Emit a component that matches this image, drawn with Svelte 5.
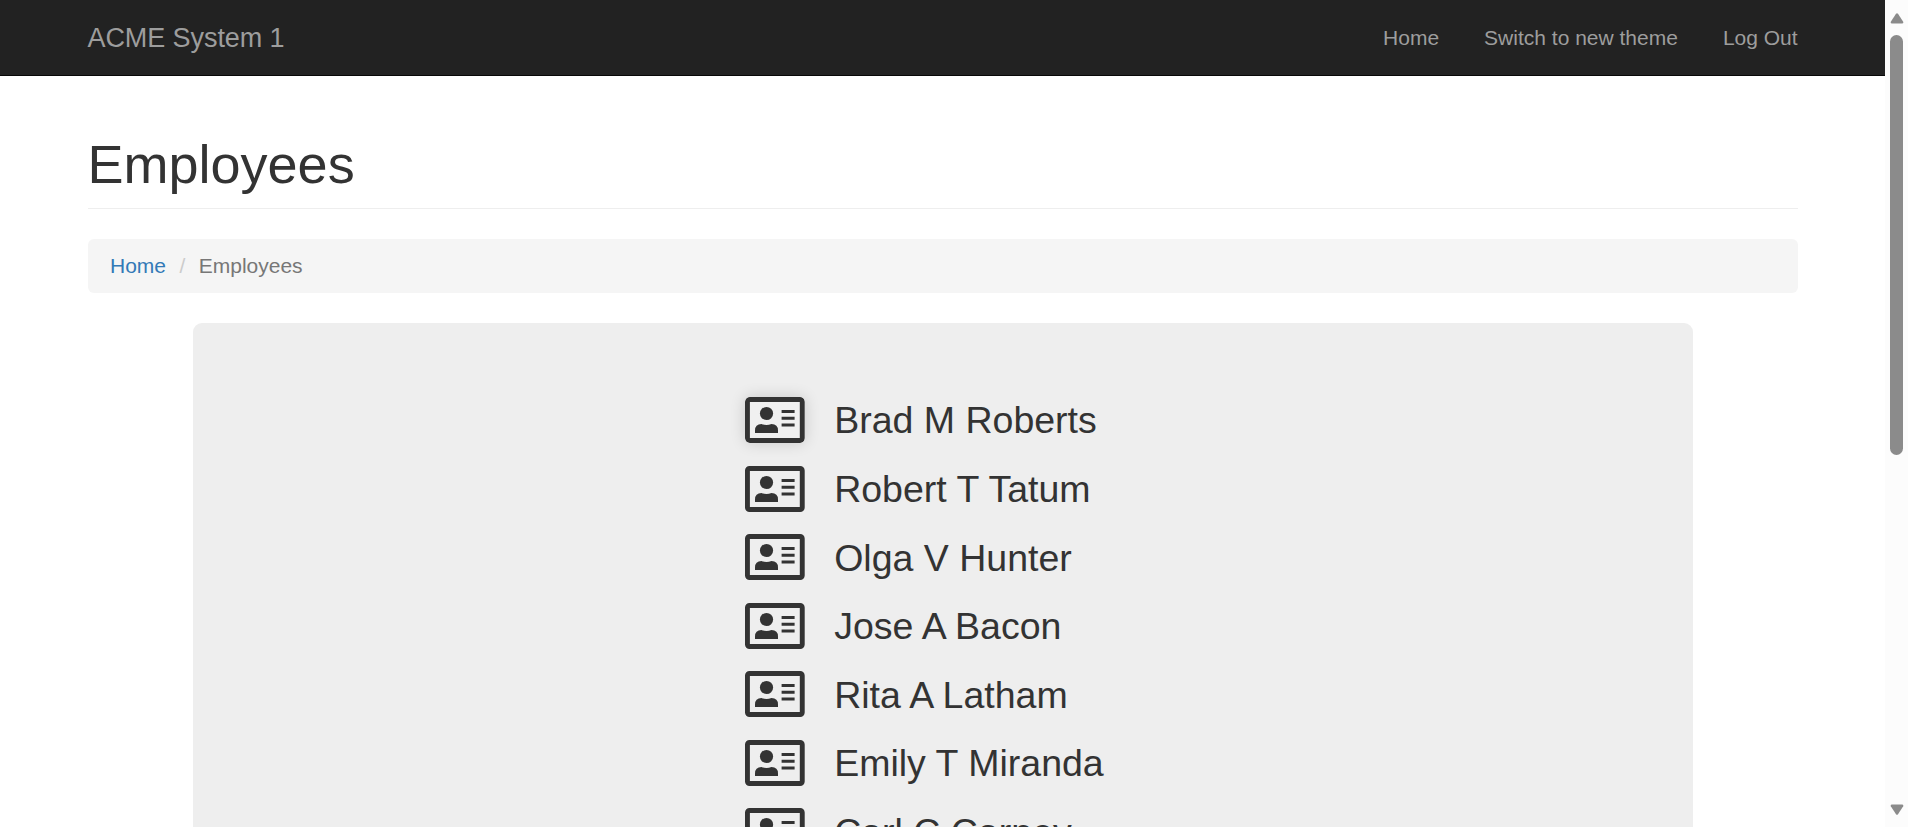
<script>
  const links = ['Home', 'Switch to new theme', 'Log Out'];
  const employees = [
    'Brad M Roberts',
    'Robert T Tatum',
    'Olga V Hunter',
    'Jose A Bacon',
    'Rita A Latham',
    'Emily T Miranda',
    'Carl C Carney'
  ];
</script>

<div class="window">
  <div class="page">
    <header class="navbar">
      <span class="brand">ACME System 1</span>
      <nav>
        {#each links as link}<span>{link}</span>{/each}
      </nav>
    </header>
    <main>
      <h1>Employees</h1>
      <div class="breadcrumb">
        <span class="home">Home</span><span class="slash">/</span><span>Employees</span>
      </div>
      <section class="panel">
        <div class="list">
          {#each employees as name, i}
            <div class="row">
              <svg class:active={i === 0} viewBox="0 0 60 46" width="60" height="46">
                <path fill-rule="evenodd" d="M4.5 0H55.2A4.5 4.5 0 0 1 59.7 4.5V41.5A4.5 4.5 0 0 1 55.2 46H4.5A4.5 4.5 0 0 1 0 41.5V4.5A4.5 4.5 0 0 1 4.5 0ZM4.9 5V41H54.8V5Z" />
                <circle cx="21.5" cy="16.5" r="6.6" />
                <path d="M10 36V33.5Q10 27 16.5 27Q21.5 29 26.5 27Q33 27 33 33.5V36Z" />
                <path d="M36.6 13H49.6V16H36.6ZM36.6 19.8H49.6V22.8H36.6ZM36.6 26.6H49.6V29.6H36.6Z" />
              </svg>
              <span>{name}</span>
            </div>
          {/each}
        </div>
      </section>
    </main>
  </div>
  <div class="scrollbar">
    <svg viewBox="0 0 14 11" width="14" height="11"><path d="M6 .8Q7 -.3 8 .8L13.2 8.8Q13.7 10.5 12 10.5H2Q.3 10.5 .8 8.8Z" /></svg>
    <div class="thumb"></div>
    <svg class="down" viewBox="0 0 14 11" width="14" height="11"><path d="M6 10.2Q7 11.3 8 10.2L13.2 2.2Q13.7 .5 12 .5H2Q.3 .5 .8 2.2Z" /></svg>
  </div>
</div>

<style>
  :global(body) {
    overflow: hidden;
    background: #fff;
  }
  .window {
    display: flex;
    height: 827px;
    overflow: hidden;
    font: 21px/30px "Liberation Sans", Arial, sans-serif;
    color: #333;
  }
  .page {
    width: 1885px;
    height: 827px;
    overflow: hidden;
  }
  .navbar {
    box-sizing: border-box;
    height: 76px;
    padding: 0 87.4px 0 87.5px;
    display: flex;
    justify-content: space-between;
    align-items: center;
    background: #222;
    border-bottom: 1px solid #080808;
    color: #9d9d9d;
  }
  .brand {
    font-size: 27px;
    letter-spacing: -0.08px;
  }
  nav {
    display: flex;
    gap: 45px;
  }
  main {
    padding: 0 87.5px;
  }
  h1 {
    box-sizing: border-box;
    margin: 0 0 30px;
    height: 133px;
    padding-top: 58px;
    border-bottom: 1px solid #eee;
    font-size: 54px;
    line-height: 60px;
    font-weight: normal;
  }
  .breadcrumb {
    display: flex;
    align-items: center;
    box-sizing: border-box;
    height: 54px;
    padding: 0 22.5px;
    border-radius: 6px;
    background: #f5f5f5;
    color: #777;
  }
  .home {
    color: #337ab7;
  }
  .slash {
    width: 32.7px;
    text-align: center;
    color: #ccc;
  }
  .panel {
    width: 1500px;
    height: 600px;
    margin: 30px auto 0;
    padding-top: 62.7px;
    box-sizing: border-box;
    border-radius: 9px;
    background: #eee;
  }
  .list {
    padding-left: 552px;
  }
  .row {
    display: flex;
    align-items: center;
    gap: 29.7px;
    height: 68.55px;
    font-size: 37.5px;
    line-height: 54px;
    white-space: nowrap;
  }
  .row span {
    padding-top: 1px;
  }
  .row svg {
    fill: #333;
    flex: none;
  }
  .row svg.active {
    background: #f0f0f0;
    border-radius: 5px;
    box-shadow: 0 0 15px rgba(0, 0, 0, 0.16);
  }
  .scrollbar {
    width: 23px;
    height: 827px;
    box-sizing: border-box;
    padding: 12.5px 0 12px;
    display: flex;
    flex-direction: column;
    align-items: center;
    background: #fcfcfc;
  }
  .scrollbar svg {
    fill: #8b8b8b;
    flex: none;
  }
  .thumb {
    width: 13px;
    height: 420px;
    margin-top: 11.5px;
    border-radius: 7px;
    background: #8b8b8b;
  }
  .down {
    margin-top: auto;
  }
</style>
